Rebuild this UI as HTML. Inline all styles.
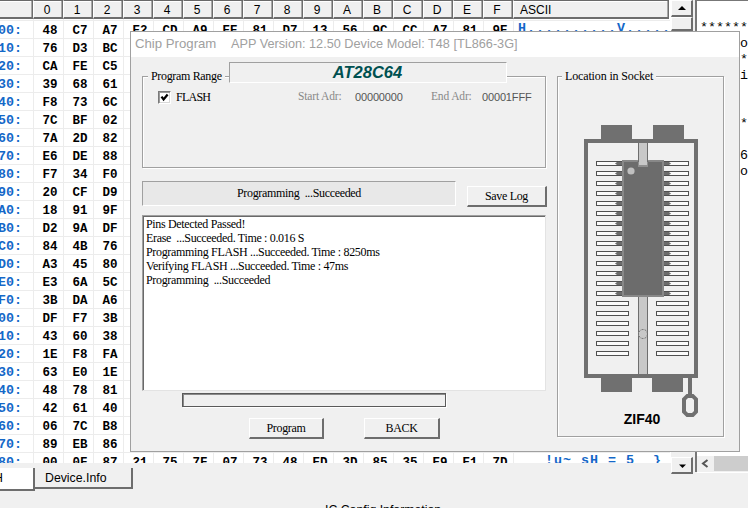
<!DOCTYPE html><html><head><meta charset="utf-8"><style>
*{margin:0;padding:0;box-sizing:border-box}
html,body{width:748px;height:508px;overflow:hidden;background:#f0f0f0;position:relative;font-family:"Liberation Sans",sans-serif}
.a{position:absolute}
.mono{font-family:"Liberation Mono",monospace}
.hc{position:absolute;top:0;height:19px;background:#f0f0f0;border-top:1px solid #696969;border-left:1px solid #fff;border-right:1px solid #6d6d6d;box-shadow:inset -1px 0 0 #a8a8a8,inset 0 1px 0 #fff;border-bottom:2px solid #6d6d6d;font-size:12px;color:#000;text-align:center;line-height:19px}
.gl{position:absolute;background:#ececec}
.hx{position:absolute;width:30px;text-align:center;font:bold 12.5px/18px "Liberation Mono",monospace;color:#000}
.ix{position:absolute;left:-30px;width:52px;text-align:right;font:bold 13.33px/18px "Liberation Mono",monospace;color:#1468c8}
.ac{position:absolute;width:9px;text-align:left;font:bold 13.33px/18px "Liberation Mono",monospace;color:#1468c8}
.serif{font-family:"Liberation Serif",serif;letter-spacing:-0.33px}
</style></head><body>

<div class="a" style="left:0;top:0;width:671px;height:463px;background:#fff;overflow:hidden">
<div class="gl" style="left:0;top:20px;width:670px;height:1px"></div>
<div class="gl" style="left:0;top:38px;width:670px;height:1px"></div>
<div class="gl" style="left:0;top:56px;width:670px;height:1px"></div>
<div class="gl" style="left:0;top:74px;width:670px;height:1px"></div>
<div class="gl" style="left:0;top:92px;width:670px;height:1px"></div>
<div class="gl" style="left:0;top:110px;width:670px;height:1px"></div>
<div class="gl" style="left:0;top:128px;width:670px;height:1px"></div>
<div class="gl" style="left:0;top:146px;width:670px;height:1px"></div>
<div class="gl" style="left:0;top:164px;width:670px;height:1px"></div>
<div class="gl" style="left:0;top:182px;width:670px;height:1px"></div>
<div class="gl" style="left:0;top:200px;width:670px;height:1px"></div>
<div class="gl" style="left:0;top:218px;width:670px;height:1px"></div>
<div class="gl" style="left:0;top:236px;width:670px;height:1px"></div>
<div class="gl" style="left:0;top:254px;width:670px;height:1px"></div>
<div class="gl" style="left:0;top:272px;width:670px;height:1px"></div>
<div class="gl" style="left:0;top:290px;width:670px;height:1px"></div>
<div class="gl" style="left:0;top:308px;width:670px;height:1px"></div>
<div class="gl" style="left:0;top:326px;width:670px;height:1px"></div>
<div class="gl" style="left:0;top:344px;width:670px;height:1px"></div>
<div class="gl" style="left:0;top:362px;width:670px;height:1px"></div>
<div class="gl" style="left:0;top:380px;width:670px;height:1px"></div>
<div class="gl" style="left:0;top:398px;width:670px;height:1px"></div>
<div class="gl" style="left:0;top:416px;width:670px;height:1px"></div>
<div class="gl" style="left:0;top:434px;width:670px;height:1px"></div>
<div class="gl" style="left:0;top:452px;width:670px;height:1px"></div>
<div class="gl" style="left:0;top:470px;width:670px;height:1px"></div>
<div class="gl" style="left:33px;top:19px;width:1px;height:450px"></div>
<div class="gl" style="left:63px;top:19px;width:1px;height:450px"></div>
<div class="gl" style="left:93px;top:19px;width:1px;height:450px"></div>
<div class="gl" style="left:123px;top:19px;width:1px;height:450px"></div>
<div class="gl" style="left:153px;top:19px;width:1px;height:450px"></div>
<div class="gl" style="left:183px;top:19px;width:1px;height:450px"></div>
<div class="gl" style="left:213px;top:19px;width:1px;height:450px"></div>
<div class="gl" style="left:243px;top:19px;width:1px;height:450px"></div>
<div class="gl" style="left:273px;top:19px;width:1px;height:450px"></div>
<div class="gl" style="left:303px;top:19px;width:1px;height:450px"></div>
<div class="gl" style="left:333px;top:19px;width:1px;height:450px"></div>
<div class="gl" style="left:363px;top:19px;width:1px;height:450px"></div>
<div class="gl" style="left:393px;top:19px;width:1px;height:450px"></div>
<div class="gl" style="left:423px;top:19px;width:1px;height:450px"></div>
<div class="gl" style="left:453px;top:19px;width:1px;height:450px"></div>
<div class="gl" style="left:483px;top:19px;width:1px;height:450px"></div>
<div class="gl" style="left:513px;top:19px;width:1px;height:450px"></div>
<div class="ix" style="top:22px">0000:</div>
<div class="hx" style="left:35px;top:22px">48</div>
<div class="hx" style="left:65px;top:22px">C7</div>
<div class="hx" style="left:95px;top:22px">A7</div>
<div class="hx" style="left:125px;top:22px">E2</div>
<div class="hx" style="left:155px;top:22px">CD</div>
<div class="hx" style="left:185px;top:22px">A9</div>
<div class="hx" style="left:215px;top:22px">EE</div>
<div class="hx" style="left:245px;top:22px">81</div>
<div class="hx" style="left:275px;top:22px">D7</div>
<div class="hx" style="left:305px;top:22px">13</div>
<div class="hx" style="left:335px;top:22px">56</div>
<div class="hx" style="left:365px;top:22px">9C</div>
<div class="hx" style="left:395px;top:22px">CC</div>
<div class="hx" style="left:425px;top:22px">A7</div>
<div class="hx" style="left:455px;top:22px">81</div>
<div class="hx" style="left:485px;top:22px">9E</div>
<div class="ix" style="top:40px">0010:</div>
<div class="hx" style="left:35px;top:40px">76</div>
<div class="hx" style="left:65px;top:40px">D3</div>
<div class="hx" style="left:95px;top:40px">BC</div>
<div class="ix" style="top:58px">0020:</div>
<div class="hx" style="left:35px;top:58px">CA</div>
<div class="hx" style="left:65px;top:58px">FE</div>
<div class="hx" style="left:95px;top:58px">C5</div>
<div class="ix" style="top:76px">0030:</div>
<div class="hx" style="left:35px;top:76px">39</div>
<div class="hx" style="left:65px;top:76px">68</div>
<div class="hx" style="left:95px;top:76px">61</div>
<div class="ix" style="top:94px">0040:</div>
<div class="hx" style="left:35px;top:94px">F8</div>
<div class="hx" style="left:65px;top:94px">73</div>
<div class="hx" style="left:95px;top:94px">6C</div>
<div class="ix" style="top:112px">0050:</div>
<div class="hx" style="left:35px;top:112px">7C</div>
<div class="hx" style="left:65px;top:112px">BF</div>
<div class="hx" style="left:95px;top:112px">02</div>
<div class="ix" style="top:130px">0060:</div>
<div class="hx" style="left:35px;top:130px">7A</div>
<div class="hx" style="left:65px;top:130px">2D</div>
<div class="hx" style="left:95px;top:130px">82</div>
<div class="ix" style="top:148px">0070:</div>
<div class="hx" style="left:35px;top:148px">E6</div>
<div class="hx" style="left:65px;top:148px">DE</div>
<div class="hx" style="left:95px;top:148px">88</div>
<div class="ix" style="top:166px">0080:</div>
<div class="hx" style="left:35px;top:166px">F7</div>
<div class="hx" style="left:65px;top:166px">34</div>
<div class="hx" style="left:95px;top:166px">F0</div>
<div class="ix" style="top:184px">0090:</div>
<div class="hx" style="left:35px;top:184px">20</div>
<div class="hx" style="left:65px;top:184px">CF</div>
<div class="hx" style="left:95px;top:184px">D9</div>
<div class="ix" style="top:202px">00A0:</div>
<div class="hx" style="left:35px;top:202px">18</div>
<div class="hx" style="left:65px;top:202px">91</div>
<div class="hx" style="left:95px;top:202px">9F</div>
<div class="ix" style="top:220px">00B0:</div>
<div class="hx" style="left:35px;top:220px">D2</div>
<div class="hx" style="left:65px;top:220px">9A</div>
<div class="hx" style="left:95px;top:220px">DF</div>
<div class="ix" style="top:238px">00C0:</div>
<div class="hx" style="left:35px;top:238px">84</div>
<div class="hx" style="left:65px;top:238px">4B</div>
<div class="hx" style="left:95px;top:238px">76</div>
<div class="ix" style="top:256px">00D0:</div>
<div class="hx" style="left:35px;top:256px">A3</div>
<div class="hx" style="left:65px;top:256px">45</div>
<div class="hx" style="left:95px;top:256px">80</div>
<div class="ix" style="top:274px">00E0:</div>
<div class="hx" style="left:35px;top:274px">E3</div>
<div class="hx" style="left:65px;top:274px">6A</div>
<div class="hx" style="left:95px;top:274px">5C</div>
<div class="ix" style="top:292px">00F0:</div>
<div class="hx" style="left:35px;top:292px">3B</div>
<div class="hx" style="left:65px;top:292px">DA</div>
<div class="hx" style="left:95px;top:292px">A6</div>
<div class="ix" style="top:310px">0000:</div>
<div class="hx" style="left:35px;top:310px">DF</div>
<div class="hx" style="left:65px;top:310px">F7</div>
<div class="hx" style="left:95px;top:310px">3B</div>
<div class="ix" style="top:328px">0010:</div>
<div class="hx" style="left:35px;top:328px">43</div>
<div class="hx" style="left:65px;top:328px">60</div>
<div class="hx" style="left:95px;top:328px">38</div>
<div class="ix" style="top:346px">0020:</div>
<div class="hx" style="left:35px;top:346px">1E</div>
<div class="hx" style="left:65px;top:346px">F8</div>
<div class="hx" style="left:95px;top:346px">FA</div>
<div class="ix" style="top:364px">0030:</div>
<div class="hx" style="left:35px;top:364px">63</div>
<div class="hx" style="left:65px;top:364px">E0</div>
<div class="hx" style="left:95px;top:364px">1E</div>
<div class="ix" style="top:382px">0040:</div>
<div class="hx" style="left:35px;top:382px">48</div>
<div class="hx" style="left:65px;top:382px">78</div>
<div class="hx" style="left:95px;top:382px">81</div>
<div class="ix" style="top:400px">0050:</div>
<div class="hx" style="left:35px;top:400px">42</div>
<div class="hx" style="left:65px;top:400px">61</div>
<div class="hx" style="left:95px;top:400px">40</div>
<div class="ix" style="top:418px">0060:</div>
<div class="hx" style="left:35px;top:418px">06</div>
<div class="hx" style="left:65px;top:418px">7C</div>
<div class="hx" style="left:95px;top:418px">B8</div>
<div class="ix" style="top:436px">0070:</div>
<div class="hx" style="left:35px;top:436px">89</div>
<div class="hx" style="left:65px;top:436px">EB</div>
<div class="hx" style="left:95px;top:436px">86</div>
<div class="ix" style="top:454px">0080:</div>
<div class="hx" style="left:35px;top:454px">00</div>
<div class="hx" style="left:65px;top:454px">0F</div>
<div class="hx" style="left:95px;top:454px">87</div>
<div class="hx" style="left:125px;top:454px">21</div>
<div class="hx" style="left:155px;top:454px">75</div>
<div class="hx" style="left:185px;top:454px">7F</div>
<div class="hx" style="left:215px;top:454px">07</div>
<div class="hx" style="left:245px;top:454px">73</div>
<div class="hx" style="left:275px;top:454px">48</div>
<div class="hx" style="left:305px;top:454px">ED</div>
<div class="hx" style="left:335px;top:454px">3D</div>
<div class="hx" style="left:365px;top:454px">85</div>
<div class="hx" style="left:395px;top:454px">35</div>
<div class="hx" style="left:425px;top:454px">E9</div>
<div class="hx" style="left:455px;top:454px">E1</div>
<div class="hx" style="left:485px;top:454px">7D</div>
<div class="ac" style="left:518px;top:20px">H</div>
<div class="ac" style="left:527px;top:20px">.</div>
<div class="ac" style="left:536px;top:20px">.</div>
<div class="ac" style="left:545px;top:20px">.</div>
<div class="ac" style="left:554px;top:20px">.</div>
<div class="ac" style="left:563px;top:20px">.</div>
<div class="ac" style="left:572px;top:20px">.</div>
<div class="ac" style="left:581px;top:20px">.</div>
<div class="ac" style="left:590px;top:20px">.</div>
<div class="ac" style="left:599px;top:20px">.</div>
<div class="ac" style="left:608px;top:20px">.</div>
<div class="ac" style="left:617px;top:20px">V</div>
<div class="ac" style="left:626px;top:20px">.</div>
<div class="ac" style="left:635px;top:20px">.</div>
<div class="ac" style="left:644px;top:20px">.</div>
<div class="ac" style="left:653px;top:20px">.</div>
<div class="ac" style="left:662px;top:20px">.</div>
<div class="ac" style="left:545px;top:452px">!</div>
<div class="ac" style="left:554px;top:452px">u</div>
<div class="ac" style="left:563px;top:452px">~</div>
<div class="ac" style="left:581px;top:452px">s</div>
<div class="ac" style="left:590px;top:452px">H</div>
<div class="ac" style="left:608px;top:452px">=</div>
<div class="ac" style="left:626px;top:452px">5</div>
<div class="ac" style="left:653px;top:452px">}</div>
<div class="hc" style="left:0;width:33px;border-left:none"></div>
<div class="hc" style="left:33px;width:30px;padding-right:2px">0</div>
<div class="hc" style="left:63px;width:30px;padding-right:2px">1</div>
<div class="hc" style="left:93px;width:30px;padding-right:2px">2</div>
<div class="hc" style="left:123px;width:30px;padding-right:2px">3</div>
<div class="hc" style="left:153px;width:30px;padding-right:2px">4</div>
<div class="hc" style="left:183px;width:30px;padding-right:2px">5</div>
<div class="hc" style="left:213px;width:30px;padding-right:2px">6</div>
<div class="hc" style="left:243px;width:30px;padding-right:2px">7</div>
<div class="hc" style="left:273px;width:30px;padding-right:2px">8</div>
<div class="hc" style="left:303px;width:30px;padding-right:2px">9</div>
<div class="hc" style="left:333px;width:30px;padding-right:2px">A</div>
<div class="hc" style="left:363px;width:30px;padding-right:2px">B</div>
<div class="hc" style="left:393px;width:30px;padding-right:2px">C</div>
<div class="hc" style="left:423px;width:30px;padding-right:2px">D</div>
<div class="hc" style="left:453px;width:30px;padding-right:2px">E</div>
<div class="hc" style="left:483px;width:30px;padding-right:2px">F</div>
<div class="hc" style="left:513px;width:156px;text-align:left;padding-left:6px">ASCII</div>
</div>
<div class="a" style="left:672px;top:0;width:23px;height:473px;background:#f0f0f0"></div>
<div class="a" style="left:671px;top:0;width:22px;height:17px;background:#f0f0f0;border:1px solid #fff;border-right:2px solid #6d6d6d;border-bottom:2px solid #6d6d6d"></div>
<svg class="a" style="left:671px;top:0" width="21" height="16"><path d="M7 10 L15 10 L11 6 Z" fill="#000"/></svg>
<div class="a" style="left:671px;top:17px;width:22px;height:14px;background:#f0f0f0;border:1px solid #fff;border-right:2px solid #6d6d6d;border-bottom:2px solid #6d6d6d"></div>
<div class="a" style="left:671px;top:457px;width:22px;height:17px;background:#f0f0f0;border:1px solid #fff;border-right:2px solid #6d6d6d;border-bottom:2px solid #6d6d6d"></div>
<svg class="a" style="left:672px;top:457px" width="21" height="17"><path d="M7 7.5 L14 7.5 L10.5 11 Z" fill="#000"/></svg>
<div class="a" style="left:695px;top:0;width:60px;height:472px;background:#fff;border-left:2px solid #777;border-top:1px solid #777"></div>
<div class="a mono" style="left:700px;top:20px;font-size:13.33px;line-height:16px;color:#000;white-space:pre">******</div>
<div class="a mono" style="left:700px;top:36px;font-size:13.33px;line-height:16px;color:#000;white-space:pre">     o</div>
<div class="a mono" style="left:700px;top:52px;font-size:13.33px;line-height:16px;color:#000;white-space:pre">     *</div>
<div class="a mono" style="left:700px;top:68px;font-size:13.33px;line-height:16px;color:#000;white-space:pre">     i</div>
<div class="a mono" style="left:700px;top:116px;font-size:13.33px;line-height:16px;color:#000;white-space:pre">     *</div>
<div class="a mono" style="left:700px;top:148px;font-size:13.33px;line-height:16px;color:#000;white-space:pre">     6</div>
<div class="a mono" style="left:700px;top:164px;font-size:13.33px;line-height:16px;color:#000;white-space:pre">     o</div>
<div class="a" style="left:697px;top:456px;width:51px;height:16px;background:#f0f0f0"></div>
<div class="a" style="left:697px;top:472px;width:51px;height:1px;background:#fff"></div>
<div class="a" style="left:714px;top:456px;width:34px;height:15px;background:#cdcdcd"></div>
<svg class="a" style="left:697px;top:456px" width="17" height="16"><path d="M10.5 4 L6 7.5 L10.5 11" stroke="#555" stroke-width="2" fill="none"/></svg>
<div class="a" style="left:-10px;top:468px;width:45px;height:23px;background:#fff;border-right:2px solid #6d6d6d;border-bottom:2px solid #6d6d6d"></div>
<div class="a" style="left:-6px;top:471px;font-size:12.3px;line-height:14px;color:#000">H</div>
<div class="a" style="left:35px;top:468px;width:98px;height:21px;background:#f0f0f0;border-right:2px solid #6d6d6d;border-bottom:2px solid #6d6d6d"></div>
<div class="a" style="left:45px;top:471px;font-size:12.3px;line-height:14px;color:#000">Device.Info</div>
<div class="a" style="left:325px;top:503px;font-size:12.3px;line-height:14px;color:#000;white-space:pre">IC Config Information</div>
<div class="a" style="left:130px;top:31px;width:610px;height:421px;background:#f0f0f0;border:1px solid #a0a0a0"></div>
<div class="a" style="left:131px;top:32px;width:608px;height:25px;background:#fff"></div>
<div class="a" style="left:135px;top:35px;font-size:13.2px;line-height:18px;color:#a0a0a0;white-space:pre">Chip Program</div>
<div class="a" style="left:231px;top:35px;font-size:12.7px;line-height:18px;color:#a0a0a0;white-space:pre">APP Version: 12.50 Device Model: T48 [TL866-3G]</div>
<div class="a" style="left:142px;top:76px;width:404px;height:92px;border:1px solid #a0a0a0;box-shadow:inset 1px 1px 0 #fff,1px 1px 0 #fff"></div>
<div class="a serif" style="left:148px;top:69px;padding:0 3px;background:#f0f0f0;font-size:12px;line-height:14px;color:#000;white-space:pre">Program Range</div>
<div class="a" style="left:229px;top:62px;width:278px;height:21px;background:#f0f0f0;border-top:1px solid #a0a0a0;border-left:1px solid #a0a0a0;border-bottom:1px solid #fff;border-right:1px solid #fff"></div>
<div class="a" style="left:229px;top:62px;width:277px;height:21px;text-align:center;font:italic bold 16.5px/20px 'Liberation Sans',sans-serif;color:#005050">AT28C64</div>
<div class="a" style="left:158px;top:91px;width:13px;height:13px;background:#fff;border-top:1px solid #7a7a7a;border-left:1px solid #7a7a7a;border-bottom:1px solid #fff;border-right:1px solid #fff;box-shadow:inset 1px 1px 0 #9a9a9a,inset -1px -1px 0 #d8d8d8"></div>
<svg class="a" style="left:0;top:0" width="200" height="120"><path d="M161.5 96.6 L163.6 99.4 L167.6 94.6" stroke="#000" stroke-width="2.3" fill="none"/></svg>
<div class="a serif" style="left:176px;top:90px;font-size:12px;line-height:14px;color:#000;letter-spacing:-0.75px">FLASH</div>
<div class="a serif" style="left:298px;top:89px;font-size:11.5px;line-height:14px;color:#888;white-space:pre;letter-spacing:-0.15px">Start Adr:</div>
<div class="a" style="left:355px;top:90px;font-size:11px;line-height:14px;color:#555;letter-spacing:-0.15px">00000000</div>
<div class="a serif" style="left:431px;top:89px;font-size:11.5px;line-height:14px;color:#888;white-space:pre;letter-spacing:-0.15px">End Adr:</div>
<div class="a" style="left:482px;top:90px;font-size:11px;line-height:14px;color:#555;letter-spacing:-0.15px">00001FFF</div>
<div class="a" style="left:142px;top:181px;width:314px;height:25px;background:#e8e8e8;border-top:1px solid #a0a0a0;border-left:1px solid #a0a0a0;border-bottom:1px solid #fff;border-right:1px solid #fff"></div>
<div class="a serif" style="left:142px;top:181px;width:314px;height:25px;text-align:center;font-size:12px;line-height:24px;color:#000;white-space:pre">Programming  ...Succeeded</div>
<div class="a" style="left:467px;top:186px;width:80px;height:21px;background:#f0f0f0;border-top:1px solid #fff;border-left:1px solid #fff;border-right:2px solid #6d6d6d;border-bottom:2px solid #6d6d6d"></div>
<div class="a serif" style="left:467px;top:185px;width:79px;height:22px;text-align:center;font-size:12px;line-height:22px;color:#000">Save Log</div>
<div class="a" style="left:142px;top:215px;width:404px;height:176px;background:#fff;border-top:1px solid #a0a0a0;border-left:1px solid #a0a0a0;border-bottom:1px solid #e3e3e3;border-right:1px solid #e3e3e3;box-shadow:inset 1px 1px 0 #696969"></div>
<div class="a serif" style="left:146px;top:217px;font-size:12px;line-height:14px;color:#000;white-space:pre">Pins Detected Passed!</div>
<div class="a serif" style="left:146px;top:231px;font-size:12px;line-height:14px;color:#000;white-space:pre">Erase  ...Succeeded. Time : 0.016 S</div>
<div class="a serif" style="left:146px;top:245px;font-size:12px;line-height:14px;color:#000;white-space:pre">Programming FLASH ...Succeeded. Time : 8250ms</div>
<div class="a serif" style="left:146px;top:259px;font-size:12px;line-height:14px;color:#000;white-space:pre">Verifying FLASH ...Succeeded. Time : 47ms</div>
<div class="a serif" style="left:146px;top:273px;font-size:12px;line-height:14px;color:#000;white-space:pre">Programming  ...Succeeded</div>
<div class="a" style="left:182px;top:393px;width:264px;height:14px;background:#f0f0f0;border:1px solid #5a5a5a;box-shadow:1px 1px 0 #fff, inset 1px 1px 0 #8a8a8a"></div>
<div class="a" style="left:249px;top:418px;width:75px;height:21px;background:#f0f0f0;border-top:1px solid #fff;border-left:1px solid #fff;border-right:2px solid #6d6d6d;border-bottom:2px solid #6d6d6d"></div>
<div class="a serif" style="left:249px;top:418px;width:74px;height:21px;text-align:center;font-size:12px;line-height:21px;color:#000">Program</div>
<div class="a" style="left:364px;top:418px;width:76px;height:21px;background:#f0f0f0;border-top:1px solid #fff;border-left:1px solid #fff;border-right:2px solid #6d6d6d;border-bottom:2px solid #6d6d6d"></div>
<div class="a serif" style="left:364px;top:418px;width:75px;height:21px;text-align:center;font-size:12px;line-height:21px;color:#000">BACK</div>
<div class="a" style="left:557px;top:76px;width:167px;height:361px;border:1px solid #a0a0a0;box-shadow:inset 1px 1px 0 #fff,1px 1px 0 #fff"></div>
<div class="a serif" style="left:562px;top:69px;padding:0 3px;background:#f0f0f0;font-size:12px;line-height:14px;color:#000;white-space:pre;letter-spacing:-0.14px">Location in Socket</div>
<svg class="a" style="left:575px;top:115px" width="130" height="310" viewBox="575 115 130 310" shape-rendering="crispEdges">
<rect x="601" y="125" width="31" height="15" fill="#707070"/>
<rect x="653" y="125" width="31" height="15" fill="#707070"/>
<rect x="601" y="377" width="31" height="15" fill="#707070"/>
<rect x="652" y="377" width="31" height="15" fill="#707070"/>
<rect x="584" y="139" width="114" height="239" fill="#707070"/>
<rect x="588" y="143" width="106" height="231" fill="#f0f0f0"/>
<rect x="596" y="161" width="33" height="5" fill="#505050"/>
<rect x="597" y="162" width="31" height="3" fill="#fbfbfb"/>
<rect x="656" y="161" width="33" height="5" fill="#505050"/>
<rect x="657" y="162" width="31" height="3" fill="#fbfbfb"/>
<rect x="596" y="171" width="33" height="5" fill="#505050"/>
<rect x="597" y="172" width="31" height="3" fill="#fbfbfb"/>
<rect x="656" y="171" width="33" height="5" fill="#505050"/>
<rect x="657" y="172" width="31" height="3" fill="#fbfbfb"/>
<rect x="596" y="181" width="33" height="5" fill="#505050"/>
<rect x="597" y="182" width="31" height="3" fill="#fbfbfb"/>
<rect x="656" y="181" width="33" height="5" fill="#505050"/>
<rect x="657" y="182" width="31" height="3" fill="#fbfbfb"/>
<rect x="596" y="191" width="33" height="5" fill="#505050"/>
<rect x="597" y="192" width="31" height="3" fill="#fbfbfb"/>
<rect x="656" y="191" width="33" height="5" fill="#505050"/>
<rect x="657" y="192" width="31" height="3" fill="#fbfbfb"/>
<rect x="596" y="201" width="33" height="5" fill="#505050"/>
<rect x="597" y="202" width="31" height="3" fill="#fbfbfb"/>
<rect x="656" y="201" width="33" height="5" fill="#505050"/>
<rect x="657" y="202" width="31" height="3" fill="#fbfbfb"/>
<rect x="596" y="211" width="33" height="5" fill="#505050"/>
<rect x="597" y="212" width="31" height="3" fill="#fbfbfb"/>
<rect x="656" y="211" width="33" height="5" fill="#505050"/>
<rect x="657" y="212" width="31" height="3" fill="#fbfbfb"/>
<rect x="596" y="221" width="33" height="5" fill="#505050"/>
<rect x="597" y="222" width="31" height="3" fill="#fbfbfb"/>
<rect x="656" y="221" width="33" height="5" fill="#505050"/>
<rect x="657" y="222" width="31" height="3" fill="#fbfbfb"/>
<rect x="596" y="231" width="33" height="5" fill="#505050"/>
<rect x="597" y="232" width="31" height="3" fill="#fbfbfb"/>
<rect x="656" y="231" width="33" height="5" fill="#505050"/>
<rect x="657" y="232" width="31" height="3" fill="#fbfbfb"/>
<rect x="596" y="241" width="33" height="5" fill="#505050"/>
<rect x="597" y="242" width="31" height="3" fill="#fbfbfb"/>
<rect x="656" y="241" width="33" height="5" fill="#505050"/>
<rect x="657" y="242" width="31" height="3" fill="#fbfbfb"/>
<rect x="596" y="251" width="33" height="5" fill="#505050"/>
<rect x="597" y="252" width="31" height="3" fill="#fbfbfb"/>
<rect x="656" y="251" width="33" height="5" fill="#505050"/>
<rect x="657" y="252" width="31" height="3" fill="#fbfbfb"/>
<rect x="596" y="261" width="33" height="5" fill="#505050"/>
<rect x="597" y="262" width="31" height="3" fill="#fbfbfb"/>
<rect x="656" y="261" width="33" height="5" fill="#505050"/>
<rect x="657" y="262" width="31" height="3" fill="#fbfbfb"/>
<rect x="596" y="271" width="33" height="5" fill="#505050"/>
<rect x="597" y="272" width="31" height="3" fill="#fbfbfb"/>
<rect x="656" y="271" width="33" height="5" fill="#505050"/>
<rect x="657" y="272" width="31" height="3" fill="#fbfbfb"/>
<rect x="596" y="281" width="33" height="5" fill="#505050"/>
<rect x="597" y="282" width="31" height="3" fill="#fbfbfb"/>
<rect x="656" y="281" width="33" height="5" fill="#505050"/>
<rect x="657" y="282" width="31" height="3" fill="#fbfbfb"/>
<rect x="596" y="291" width="33" height="5" fill="#505050"/>
<rect x="597" y="292" width="31" height="3" fill="#fbfbfb"/>
<rect x="656" y="291" width="33" height="5" fill="#505050"/>
<rect x="657" y="292" width="31" height="3" fill="#fbfbfb"/>
<rect x="596" y="301" width="33" height="5" fill="#505050"/>
<rect x="597" y="302" width="31" height="3" fill="#fbfbfb"/>
<rect x="656" y="301" width="33" height="5" fill="#505050"/>
<rect x="657" y="302" width="31" height="3" fill="#fbfbfb"/>
<rect x="596" y="311" width="33" height="5" fill="#505050"/>
<rect x="597" y="312" width="31" height="3" fill="#fbfbfb"/>
<rect x="656" y="311" width="33" height="5" fill="#505050"/>
<rect x="657" y="312" width="31" height="3" fill="#fbfbfb"/>
<rect x="596" y="321" width="33" height="5" fill="#505050"/>
<rect x="597" y="322" width="31" height="3" fill="#fbfbfb"/>
<rect x="656" y="321" width="33" height="5" fill="#505050"/>
<rect x="657" y="322" width="31" height="3" fill="#fbfbfb"/>
<rect x="596" y="331" width="33" height="5" fill="#505050"/>
<rect x="597" y="332" width="31" height="3" fill="#fbfbfb"/>
<rect x="656" y="331" width="33" height="5" fill="#505050"/>
<rect x="657" y="332" width="31" height="3" fill="#fbfbfb"/>
<rect x="596" y="341" width="33" height="5" fill="#505050"/>
<rect x="597" y="342" width="31" height="3" fill="#fbfbfb"/>
<rect x="656" y="341" width="33" height="5" fill="#505050"/>
<rect x="657" y="342" width="31" height="3" fill="#fbfbfb"/>
<rect x="596" y="351" width="33" height="5" fill="#505050"/>
<rect x="597" y="352" width="31" height="3" fill="#fbfbfb"/>
<rect x="656" y="351" width="33" height="5" fill="#505050"/>
<rect x="657" y="352" width="31" height="3" fill="#fbfbfb"/>
<rect x="638" y="143" width="10" height="231" fill="#6e6e6e"/>
<rect x="639" y="143" width="8" height="231" fill="#c8c8c8"/>
<circle cx="643" cy="334" r="4.5" fill="#c8c8c8" stroke="#6a6a6a" stroke-width="1" stroke-dasharray="2 1.2" shape-rendering="auto"/>
<rect x="622" y="160" width="42" height="137" fill="#888888"/>
<rect x="624" y="162" width="38" height="133" fill="#6c6c6c"/>
<rect x="637" y="160" width="12" height="7" fill="#6c6c6c"/>
<path d="M636 160 L638 162 L638 167 L648 167 L648 162 L650 160 Z" fill="#909090" shape-rendering="auto"/>
<rect x="639" y="143" width="8" height="22" fill="#c8c8c8"/>
<rect x="638" y="143" width="1" height="19" fill="#6e6e6e"/>
<rect x="647" y="143" width="1" height="19" fill="#6e6e6e"/>
<path d="M615 163.5 L617 162 L622 162 L622 165 L617 165 Z" fill="#6c6c6c" shape-rendering="auto"/>
<path d="M671 163.5 L669 162 L664 162 L664 165 L669 165 Z" fill="#6c6c6c" shape-rendering="auto"/>
<path d="M615 173.5 L617 172 L622 172 L622 175 L617 175 Z" fill="#6c6c6c" shape-rendering="auto"/>
<path d="M671 173.5 L669 172 L664 172 L664 175 L669 175 Z" fill="#6c6c6c" shape-rendering="auto"/>
<path d="M615 183.5 L617 182 L622 182 L622 185 L617 185 Z" fill="#6c6c6c" shape-rendering="auto"/>
<path d="M671 183.5 L669 182 L664 182 L664 185 L669 185 Z" fill="#6c6c6c" shape-rendering="auto"/>
<path d="M615 193.5 L617 192 L622 192 L622 195 L617 195 Z" fill="#6c6c6c" shape-rendering="auto"/>
<path d="M671 193.5 L669 192 L664 192 L664 195 L669 195 Z" fill="#6c6c6c" shape-rendering="auto"/>
<path d="M615 203.5 L617 202 L622 202 L622 205 L617 205 Z" fill="#6c6c6c" shape-rendering="auto"/>
<path d="M671 203.5 L669 202 L664 202 L664 205 L669 205 Z" fill="#6c6c6c" shape-rendering="auto"/>
<path d="M615 213.5 L617 212 L622 212 L622 215 L617 215 Z" fill="#6c6c6c" shape-rendering="auto"/>
<path d="M671 213.5 L669 212 L664 212 L664 215 L669 215 Z" fill="#6c6c6c" shape-rendering="auto"/>
<path d="M615 223.5 L617 222 L622 222 L622 225 L617 225 Z" fill="#6c6c6c" shape-rendering="auto"/>
<path d="M671 223.5 L669 222 L664 222 L664 225 L669 225 Z" fill="#6c6c6c" shape-rendering="auto"/>
<path d="M615 233.5 L617 232 L622 232 L622 235 L617 235 Z" fill="#6c6c6c" shape-rendering="auto"/>
<path d="M671 233.5 L669 232 L664 232 L664 235 L669 235 Z" fill="#6c6c6c" shape-rendering="auto"/>
<path d="M615 243.5 L617 242 L622 242 L622 245 L617 245 Z" fill="#6c6c6c" shape-rendering="auto"/>
<path d="M671 243.5 L669 242 L664 242 L664 245 L669 245 Z" fill="#6c6c6c" shape-rendering="auto"/>
<path d="M615 253.5 L617 252 L622 252 L622 255 L617 255 Z" fill="#6c6c6c" shape-rendering="auto"/>
<path d="M671 253.5 L669 252 L664 252 L664 255 L669 255 Z" fill="#6c6c6c" shape-rendering="auto"/>
<path d="M615 263.5 L617 262 L622 262 L622 265 L617 265 Z" fill="#6c6c6c" shape-rendering="auto"/>
<path d="M671 263.5 L669 262 L664 262 L664 265 L669 265 Z" fill="#6c6c6c" shape-rendering="auto"/>
<path d="M615 273.5 L617 272 L622 272 L622 275 L617 275 Z" fill="#6c6c6c" shape-rendering="auto"/>
<path d="M671 273.5 L669 272 L664 272 L664 275 L669 275 Z" fill="#6c6c6c" shape-rendering="auto"/>
<path d="M615 283.5 L617 282 L622 282 L622 285 L617 285 Z" fill="#6c6c6c" shape-rendering="auto"/>
<path d="M671 283.5 L669 282 L664 282 L664 285 L669 285 Z" fill="#6c6c6c" shape-rendering="auto"/>
<path d="M615 293.5 L617 292 L622 292 L622 295 L617 295 Z" fill="#6c6c6c" shape-rendering="auto"/>
<path d="M671 293.5 L669 292 L664 292 L664 295 L669 295 Z" fill="#6c6c6c" shape-rendering="auto"/>
<circle cx="631" cy="171" r="3.6" fill="#c0c0c0" shape-rendering="auto"/>
<rect x="688" y="378" width="4" height="17" fill="#707070"/>
<path d="M686.5 394 L693.5 394 L698 398.5 L698 412.5 L693.5 417 L686.5 417 L682 412.5 L682 398.5 Z M688 398 L686 400 L686 411 L688 413 L692 413 L694 411 L694 400 L692 398 Z" fill="#707070" fill-rule="evenodd" shape-rendering="auto"/>
</svg>
<div class="a" style="left:602px;top:410px;width:80px;text-align:center;font:bold 14px/19px 'Liberation Sans',sans-serif;color:#000">ZIF40</div>
</body></html>
